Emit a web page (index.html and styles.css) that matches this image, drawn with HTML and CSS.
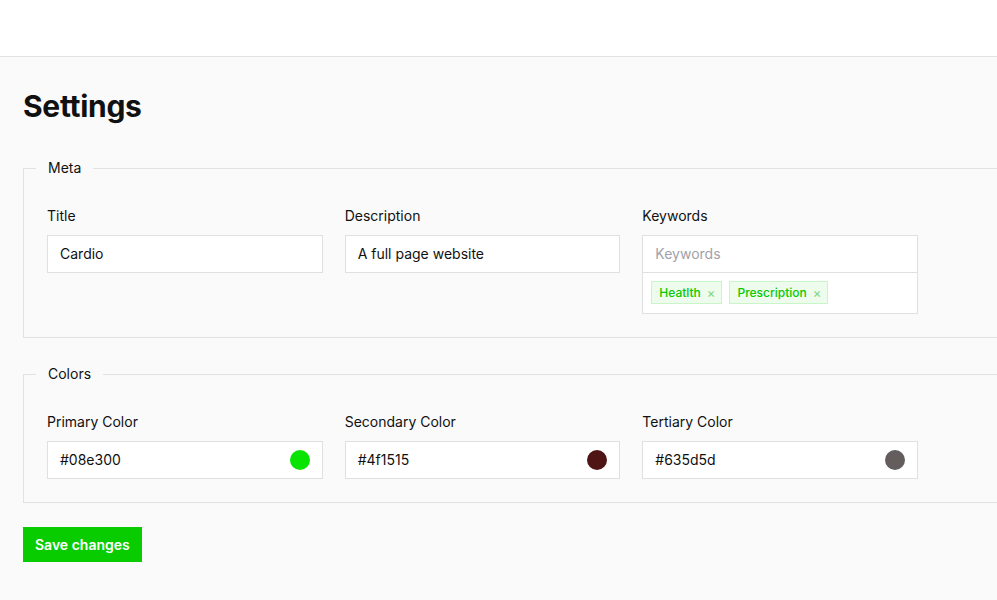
FILE: index.html
```html
<!DOCTYPE html>
<html>
<head>
<meta charset="utf-8">
<link rel="stylesheet" href="styles.css">
</head>
<body>
<header class="topbar"></header>
<main class="page">
  <h1 class="title">Settings</h1>
  <fieldset class="group">
    <legend class="legend">Meta</legend>
    <div class="grid">
      <div class="field">
        <label class="label">Title</label>
        <div class="input">Cardio</div>
      </div>
      <div class="field">
        <label class="label">Description</label>
        <div class="input">A full page website</div>
      </div>
      <div class="field">
        <label class="label">Keywords</label>
        <div class="kw">
          <div class="kw-input">Keywords</div>
          <div class="kw-tags">
            <span class="tag">Heatlth <span class="x">×</span></span>
            <span class="tag">Prescription <span class="x">×</span></span>
          </div>
        </div>
      </div>
    </div>
  </fieldset>
  <fieldset class="group group-last">
    <legend class="legend">Colors</legend>
    <div class="grid">
      <div class="field">
        <label class="label">Primary Color</label>
        <div class="input color-input"><span class="value">#08e300</span><span class="swatch" style="background:#08e300"></span></div>
      </div>
      <div class="field">
        <label class="label">Secondary Color</label>
        <div class="input color-input"><span class="value">#4f1515</span><span class="swatch" style="background:#4f1515"></span></div>
      </div>
      <div class="field">
        <label class="label">Tertiary Color</label>
        <div class="input color-input"><span class="value">#635d5d</span><span class="swatch" style="background:#635d5d"></span></div>
      </div>
    </div>
  </fieldset>
  <button class="save">Save changes</button>
</main>
</body>
</html>
```
FILE: styles.css
```css
* { box-sizing: border-box; }
html, body { margin: 0; padding: 0; }
body {
  font-family: Inter, "Noto Sans", sans-serif;
  background: #fafafa;
  color: #111;
  overflow: hidden;
  width: 997px;
  height: 600px;
}
.topbar {
  height: 57px;
  background: #fff;
  border-bottom: 1px solid #e2e2e2;
}
.page {
  padding: 0 0 0 23px;
  width: 1300px;
}
.title {
  margin: 0;
  padding-top: 31px;
  height: 101px;
  font-size: 30px;
  font-weight: 700;
  letter-spacing: -0.3px;
  line-height: 36px;
}
.group {
  margin: 0 0 26px 0;
  padding: 28px 23px 23px 23px;
  border: 1px solid #e2e2e2;
  width: 1200px;
}
.group-last { margin-bottom: 24px; }
.legend {
  padding: 0 12px;
  margin-left: -11px;
  font-size: 14px;
  line-height: 20px;
}
.grid {
  display: grid;
  grid-template-columns: 275.67px 275.67px 275.67px;
  column-gap: 22px;
  align-items: start;
}
.field { display: flex; flex-direction: column; }
.label {
  font-size: 14px;
  line-height: 20px;
  margin-bottom: 9px;
}
.input {
  height: 38px;
  background: #fff;
  border: 1px solid #e0e0e0;
  padding: 0 12px 1px 12px;
  font-size: 14px;
  display: flex;
  align-items: center;
}
.color-input { justify-content: space-between; padding-bottom: 0; }
.color-input .value { margin-bottom: 2px; }
.swatch {
  width: 20px;
  height: 20px;
  border-radius: 50%;
  display: inline-block;
}
.kw {
  background: #fff;
  border: 1px solid #e0e0e0;
}
.kw-input {
  height: 37px;
  padding: 0 12px 1px 12px;
  display: flex;
  align-items: center;
  font-size: 14px;
  color: #a1a1aa;
  border-bottom: 1px solid #e0e0e0;
}
.kw-tags {
  display: flex;
  gap: 7px;
  padding: 8px 8px 9px 8px;
}
.tag {
  height: 23px;
  display: inline-flex;
  align-items: center;
  padding: 0 6px 0 7px;
  background: #edfced;
  border: 1px solid #c9f5c9;
  color: #08c800;
  font-size: 12px;
  font-weight: 500;
}
.tag .x {
  margin-left: 6px;
  color: #7fd67f;
  font-size: 13px;
  font-weight: 400;
}
.save {
  display: block;
  height: 35px;
  padding: 0 12px;
  background: #08cc00;
  color: #fff;
  border: none;
  font-family: Inter, "Noto Sans", sans-serif;
  font-size: 14px;
  font-weight: 600;
}
```
